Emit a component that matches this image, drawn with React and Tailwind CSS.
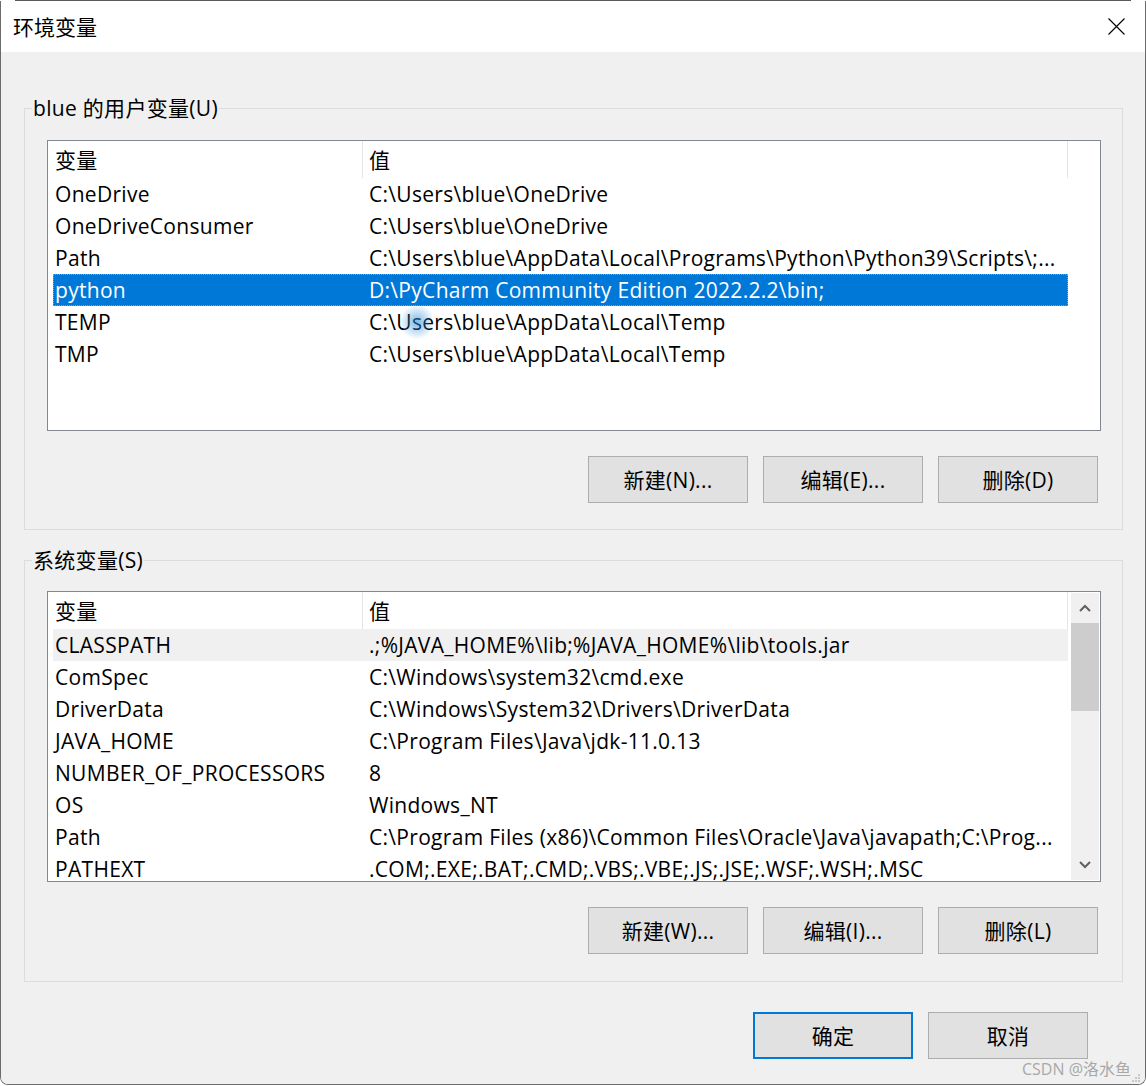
import React from "react";

const F = "font-['Open_Sans','Noto_Sans_CJK_SC',sans-serif]";

const userVars = [
  ["OneDrive", "C:\\Users\\blue\\OneDrive"],
  ["OneDriveConsumer", "C:\\Users\\blue\\OneDrive"],
  ["Path", "C:\\Users\\blue\\AppData\\Local\\Programs\\Python\\Python39\\Scripts\\;..."],
  ["python", "D:\\PyCharm Community Edition 2022.2.2\\bin;"],
  ["TEMP", "C:\\Users\\blue\\AppData\\Local\\Temp"],
  ["TMP", "C:\\Users\\blue\\AppData\\Local\\Temp"],
];

const sysVars = [
  ["CLASSPATH", ".;%JAVA_HOME%\\lib;%JAVA_HOME%\\lib\\tools.jar"],
  ["ComSpec", "C:\\Windows\\system32\\cmd.exe"],
  ["DriverData", "C:\\Windows\\System32\\Drivers\\DriverData"],
  ["JAVA_HOME", "C:\\Program Files\\Java\\jdk-11.0.13"],
  ["NUMBER_OF_PROCESSORS", "8"],
  ["OS", "Windows_NT"],
  ["Path", "C:\\Program Files (x86)\\Common Files\\Oracle\\Java\\javapath;C:\\Prog..."],
  ["PATHEXT", ".COM;.EXE;.BAT;.CMD;.VBS;.VBE;.JS;.JSE;.WSF;.WSH;.MSC"],
];

function Header() {
  return (
    <div className="flex h-[37px] shrink-0 items-center bg-white">
      <div className="flex h-full w-[314px] items-center pl-[7px]">变量</div>
      <div className="h-full w-px bg-[#e5e5e5]" />
      <div className="flex h-full w-[704px] items-center pl-[6px]">值</div>
      <div className="h-full w-px bg-[#e5e5e5]" />
    </div>
  );
}

function Row({ name, value, selected, hover }) {
  const bg = selected
    ? "bg-[#0078d7] text-white outline outline-1 outline-dotted outline-[#e08a3c] -outline-offset-1"
    : hover
    ? "bg-[#f0f0f0]"
    : "";
  return (
    <div className={`ml-[5px] flex h-[32px] w-[1015px] shrink-0 items-center whitespace-nowrap ${bg}`}>
      <div className="w-[314px] pl-[2px]">{name}</div>
      <div className="pl-[2px]">{value}</div>
    </div>
  );
}

function Btn({ children, primary }) {
  return (
    <div
      className={`flex h-[47px] w-[160px] items-center justify-center bg-[#e1e1e1] ${
        primary ? "border-2 border-[#0078d7]" : "border border-[#adadad]"
      }`}
    >
      {children}
    </div>
  );
}

function Chevron({ up }) {
  return (
    <svg width="12" height="8" viewBox="0 0 12 8" className="block">
      <path
        d={up ? "M1 7 L6 2 L11 7" : "M1 1 L6 6 L11 1"}
        fill="none"
        stroke="#606060"
        strokeWidth="2"
      />
    </svg>
  );
}

export default function App() {
  return (
    <div className={`relative h-[1086px] w-[1146px] overflow-hidden bg-white text-[21px] leading-[28px] tracking-[0.3px] text-black ${F}`}>
      <div className="mx-[15px] h-px bg-[#5a5a5a]" />
      <div className="flex h-[1084px] flex-col overflow-hidden rounded-b-[8px] border-x border-b border-[#6b6b6b]">
        {/* title bar */}
        <div className="flex h-[51px] shrink-0 items-center justify-between bg-white pl-[12px] pr-[20px]">
          <div className="tracking-normal">环境变量</div>
          <svg width="17" height="17" viewBox="0 0 17 17">
            <path d="M0.5 0.5 L16.5 16.5 M16.5 0.5 L0.5 16.5" stroke="#000" strokeWidth="1.1" />
          </svg>
        </div>

        {/* body */}
        <div className="flex flex-1 flex-col bg-[#f0f0f0] pl-[23px] pr-[22px] pt-[56px]">
          {/* group 1 */}
          <div className="flex h-[422px] shrink-0 flex-col border border-[#dcdcdc]">
            <div className="-mt-[15px] ml-[7px] w-fit bg-[#f0f0f0] px-[1px]">blue 的用户变量(U)</div>
            <div className="ml-[22px] mr-[21px] mt-[18px] flex h-[291px] flex-col overflow-hidden border border-[#828790] bg-white">
              <Header />
              {userVars.map(([n, v], i) => (
                <Row key={n} name={n} value={v} selected={i === 3} />
              ))}
            </div>
            <div className="mt-[25px] flex justify-end gap-[15px] pr-[24px]">
              <Btn>新建(N)...</Btn>
              <Btn>编辑(E)...</Btn>
              <Btn>删除(D)</Btn>
            </div>
          </div>

          {/* group 2 */}
          <div className="mt-[30px] flex h-[422px] shrink-0 flex-col border border-[#dcdcdc]">
            <div className="-mt-[15px] ml-[7px] w-fit bg-[#f0f0f0] px-[1px]">系统变量(S)</div>
            <div className="ml-[22px] mr-[21px] mt-[17px] flex h-[291px] overflow-hidden border border-[#828790] bg-white">
              <div className="flex flex-1 flex-col overflow-hidden">
                <Header />
                {sysVars.map(([n, v], i) => (
                  <Row key={n} name={n} value={v} hover={i === 0} />
                ))}
              </div>
              <div className="my-[1px] mr-[1px] flex w-[28px] shrink-0 flex-col bg-[#f0f0f0]">
                <div className="flex h-[30px] items-center justify-center">
                  <Chevron up />
                </div>
                <div className="h-[88px] bg-[#cdcdcd]" />
                <div className="flex-1" />
                <div className="flex h-[30px] items-center justify-center">
                  <Chevron />
                </div>
              </div>
            </div>
            <div className="mt-[25px] flex justify-end gap-[15px] pr-[24px]">
              <Btn>新建(W)...</Btn>
              <Btn>编辑(I)...</Btn>
              <Btn>删除(L)</Btn>
            </div>
          </div>

          {/* footer buttons */}
          <div className="mt-[30px] flex shrink-0 justify-end gap-[15px] pr-[35px]">
            <Btn primary>确定</Btn>
            <Btn>取消</Btn>
          </div>
          <div className="-mr-[8px] mt-0 flex h-[20px] shrink-0 items-center justify-end text-[16px] leading-[20px] tracking-normal text-[#a8a8a8]">
            <span>CSDN @洛水鱼</span>
          </div>
        </div>
      </div>

      {/* resize grip */}
      <svg className="absolute left-[1131px] top-[1073px]" width="10" height="10" viewBox="0 0 10 10">
        <rect x="7" y="1" width="2" height="2" fill="#c8c8c8" />
        <rect x="4" y="4" width="2" height="2" fill="#c8c8c8" />
        <rect x="7" y="4" width="2" height="2" fill="#c8c8c8" />
        <rect x="1" y="7" width="2" height="2" fill="#c8c8c8" />
        <rect x="4" y="7" width="2" height="2" fill="#c8c8c8" />
        <rect x="7" y="7" width="2" height="2" fill="#c8c8c8" />
      </svg>

      {/* cursor glow */}
      <div className="pointer-events-none absolute left-[402px] top-[302px] h-[40px] w-[30px] rounded-full bg-[radial-gradient(circle,rgba(40,140,215,0.6),rgba(40,140,215,0)_70%)]" />
    </div>
  );
}
